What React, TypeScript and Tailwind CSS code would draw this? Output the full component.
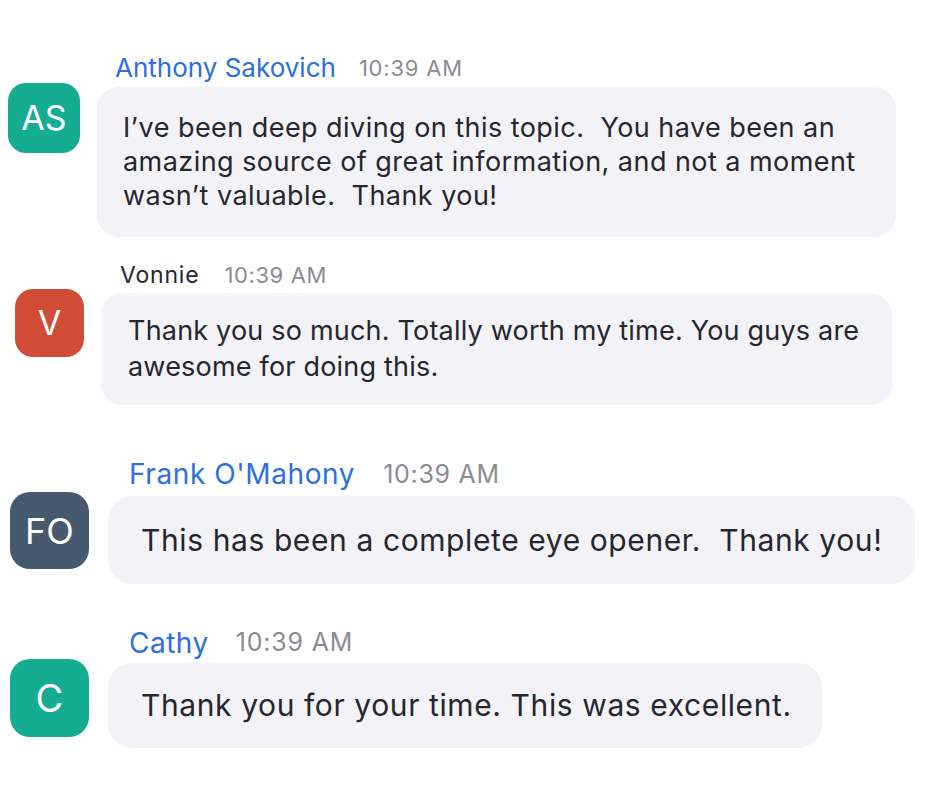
import React from "react"

const font = { fontFamily: "Inter, 'Noto Sans', 'Liberation Sans', sans-serif" }

export default function App() {
    return (
        <div className="min-h-screen w-[940px] bg-white pt-[55px] text-[#26262e]" style={font}>
            {/* Anthony */}
            <div className="flex">
                <div className="ml-[8px] mt-[28px] flex h-[70px] w-[72px] shrink-0 items-center justify-center rounded-[18px] bg-[#14ad92] text-[34px] leading-none text-white">
                    AS
                </div>
                <div className="ml-[17px] flex flex-col">
                    <div className="flex h-[25px] items-center gap-[23px] pl-[18px] leading-none">
                        <span className="text-[26px] text-[#2b6fe0]">Anthony Sakovich</span>
                        <span className="text-[22px] tracking-[0.8px] text-[#8b8b93]">10:39 AM</span>
                    </div>
                    <div className="mt-[7px] w-[799px] whitespace-pre rounded-[22px] bg-[#f2f2f7] px-[26px] py-[24px] text-[27px] leading-[34px] tracking-[0.45px]">
                        {"I’ve been deep diving on this topic.  You have been an\namazing source of great information, and not a moment\nwasn’t valuable.  Thank you!"}
                    </div>
                </div>
            </div>

            {/* Vonnie */}
            <div className="mt-[27px] flex">
                <div className="ml-[15px] mt-[25px] flex h-[68px] w-[69px] shrink-0 items-center justify-center rounded-[18px] bg-[#d04c37] text-[34px] leading-none text-white">
                    V
                </div>
                <div className="ml-[17px] flex flex-col">
                    <div className="flex h-[22px] items-center gap-[25px] pl-[19px] leading-none">
                        <span className="text-[23px] tracking-[0.8px] text-[#26262e]">Vonnie</span>
                        <span className="text-[22px] tracking-[0.6px] text-[#8b8b93]">10:39 AM</span>
                    </div>
                    <div className="mt-[7px] w-[791px] whitespace-pre rounded-[22px] bg-[#f2f2f7] px-[27px] py-[20px] text-[27px] leading-[36px] tracking-[0.2px]">
                        {"Thank you so much. Totally worth my time. You guys are\nawesome for doing this."}
                    </div>
                </div>
            </div>

            {/* Frank */}
            <div className="mt-[57px] flex">
                <div className="ml-[10px] mt-[30px] flex h-[77px] w-[79px] shrink-0 items-center justify-center rounded-[20px] bg-[#46596e] text-[36px] leading-none text-white">
                    FO
                </div>
                <div className="ml-[19px] flex flex-col">
                    <div className="flex h-[24px] items-center gap-[28px] pl-[21px] leading-none">
                        <span className="text-[28px] tracking-[0.6px] text-[#2b6fe0]">Frank O'Mahony</span>
                        <span className="text-[25px] tracking-[0.7px] text-[#8b8b93]">10:39 AM</span>
                    </div>
                    <div className="mt-[10px] w-[807px] whitespace-pre rounded-[24px] bg-[#f2f2f7] px-[33px] py-[26px] text-[30px] leading-[36px] tracking-[0.6px]">
                        {"This has been a complete eye opener.  Thank you!"}
                    </div>
                </div>
            </div>

            {/* Cathy */}
            <div className="mt-[46px] flex">
                <div className="ml-[10px] mt-[29px] flex h-[78px] w-[79px] shrink-0 items-center justify-center rounded-[20px] bg-[#14ad92] text-[38px] leading-none text-white">
                    C
                </div>
                <div className="ml-[19px] flex flex-col">
                    <div className="flex h-[25px] items-center gap-[27px] pl-[21px] leading-none">
                        <span className="text-[28px] tracking-[0.5px] text-[#2b6fe0]">Cathy</span>
                        <span className="text-[25px] tracking-[0.8px] text-[#8b8b93]">10:39 AM</span>
                    </div>
                    <div className="mt-[8px] w-[714px] whitespace-pre rounded-[24px] bg-[#f2f2f7] px-[33px] py-[24px] text-[30px] leading-[37px] tracking-[0.6px]">
                        {"Thank you for your time. This was excellent."}
                    </div>
                </div>
            </div>
        </div>
    )
}
